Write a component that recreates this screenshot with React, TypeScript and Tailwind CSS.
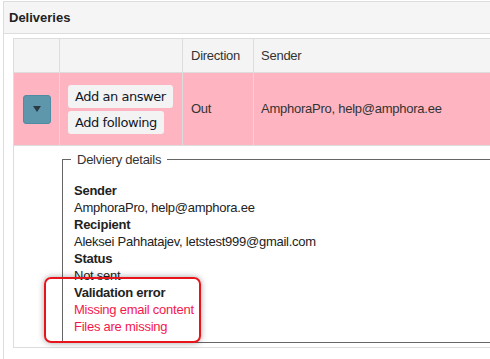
import React from "react";

export default function App() {
  const font = { fontFamily: '"Liberation Sans", Arial, sans-serif' };
  return (
    <div className="w-[490px] h-[359px] overflow-hidden bg-white text-[#333]" style={font}>
      <div className="ml-[3px] mt-[1px] w-[600px] border border-[#dddddd] bg-white">
        <div className="h-[32px] flex items-center px-[5px] bg-[#f5f5f5] border-b border-[#dddddd] text-[13px] font-bold text-[#222]">
          Deliveries
        </div>
        <div className="pl-[9px] pt-[4px] pb-[12px]">
          <div className="border-l border-t border-[#dddddd]">
            {/* header row */}
            <div className="grid grid-cols-[46px_123px_71px_1fr] h-[34px] bg-[#f4f4f4] border-b border-[#dddddd] text-[13px] tracking-[-0.25px] text-[#333]">
              <div className="border-r border-[#dddddd]" />
              <div className="border-r border-[#dddddd]" />
              <div className="border-r border-[#dddddd] flex items-center pl-[8px]">Direction</div>
              <div className="flex items-center pl-[7px]">Sender</div>
            </div>
            {/* pink row */}
            <div className="grid grid-cols-[46px_123px_71px_1fr] h-[73px] bg-[#feb5c1] border-b border-[#dddddd] text-[13px] tracking-[-0.25px] text-[#333]">
              <div className="border-r border-[#dddddd] flex items-center justify-center">
                <div className="w-[28px] h-[29px] rounded-[3px] bg-[#5e96ab] border border-[#4f8ba3] flex items-center justify-center">
                  <svg width="8" height="6" viewBox="0 0 8 6">
                    <path d="M0 0 L8 0 L4 6 Z" fill="#2b3a44" />
                  </svg>
                </div>
              </div>
              <div className="border-r border-[#dddddd] flex flex-col justify-center items-start gap-[3px] pl-[8px] pt-[1px] tracking-normal">
                <div
                  className="h-[23px] px-[7px] flex items-center rounded-[3px] bg-[#f3f3f3] text-[13px] text-[#111827] tracking-[-0.45px]"
                  style={{ fontFamily: '"DejaVu Sans", Verdana, sans-serif' }}
                >
                  Add an answer
                </div>
                <div
                  className="h-[23px] px-[7px] flex items-center rounded-[3px] bg-[#f3f3f3] text-[13px] text-[#111827] tracking-[-0.45px]"
                  style={{ fontFamily: '"DejaVu Sans", Verdana, sans-serif' }}
                >
                  Add following
                </div>
              </div>
              <div className="border-r border-[#dddddd] flex items-center pl-[8px]">Out</div>
              <div className="flex items-center pl-[7px]">AmphoraPro, help@amphora.ee</div>
            </div>
            {/* details row */}
            <div className="h-[202px] pl-[48px] pt-[5px] border-b border-[#dddddd] relative">
              <fieldset className="w-[520px] border border-[#666] pl-[11px] pr-[10px] pb-[7px] pt-[14px] m-0">
                <legend className="ml-[-3px] px-[6px] text-[13px] tracking-[-0.25px] text-[#333] leading-[17px]">Delviery details</legend>
                <div className="text-[13px] tracking-[-0.25px] leading-[17px] text-[#222]">
                  <div className="font-bold">Sender</div>
                  <div>AmphoraPro, help@amphora.ee</div>
                  <div className="font-bold">Recipient</div>
                  <div>Aleksei Pahhatajev, letstest999@gmail.com</div>
                  <div className="font-bold">Status</div>
                  <div>Not sent</div>
                  <div className="font-bold">Validation error</div>
                  <div className="text-[#f5174c]">Missing email content</div>
                  <div className="text-[#f5174c]">Files are missing</div>
                </div>
              </fieldset>
              <div className="absolute left-[30px] top-[131px] w-[157px] h-[66px] rounded-[7px] border-2 border-[#e8141c] shadow-[0_0_6px_rgba(0,0,0,0.35)] pointer-events-none" />
            </div>
          </div>
        </div>
      </div>
    </div>
  );
}
